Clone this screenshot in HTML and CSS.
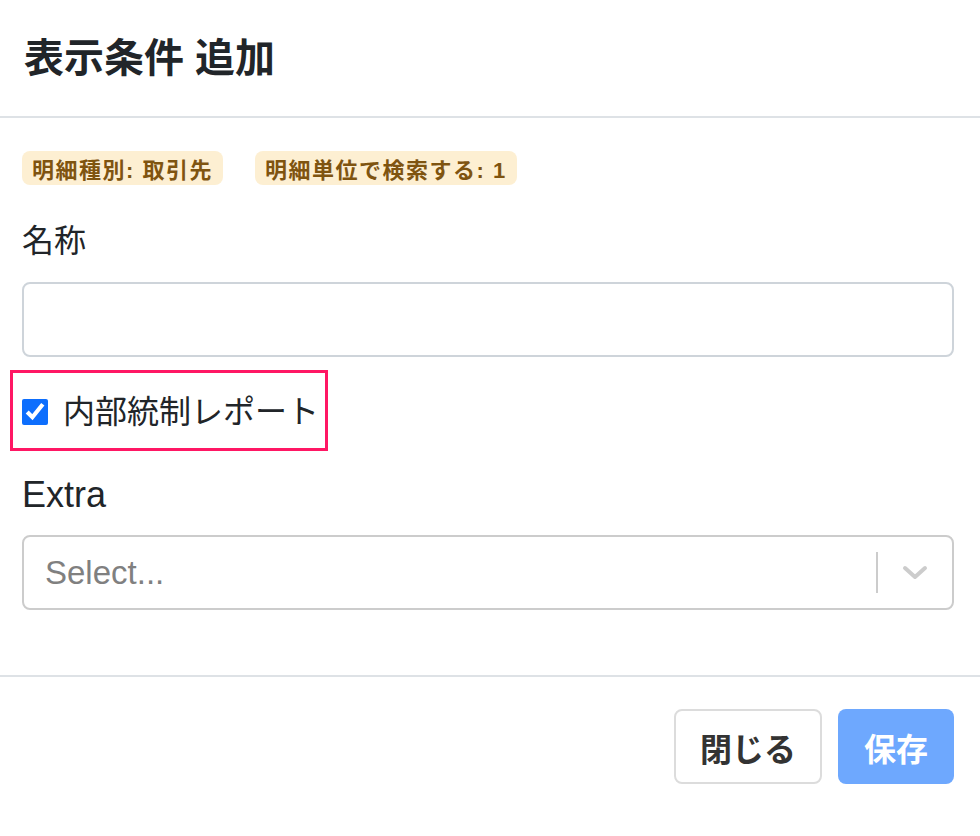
FILE: index.html
```html
<!DOCTYPE html>
<html>
<head>
    <meta charset="utf-8">
    <title>表示条件 追加</title>
    <link rel="stylesheet" href="styles.css">
</head>
<body>
    <div class="modal">
        <div class="modal-header">
            <h1 class="modal-title">表示条件 追加</h1>
        </div>
        <div class="modal-body">
            <div class="badges">
                <span class="badge">明細種別: 取引先</span>
                <span class="badge">明細単位で検索する: 1</span>
            </div>
            <div class="form-group">
                <label class="form-label" for="name">名称</label>
                <input class="form-control" type="text" id="name">
            </div>
            <div class="highlight">
                <input class="check" type="checkbox" id="internal" checked>
                <label class="check-label" for="internal">内部統制レポート</label>
            </div>
            <div class="form-group">
                <label class="form-label latin">Extra</label>
                <div class="select">
                    <span class="placeholder">Select...</span>
                    <span class="separator"></span>
                    <svg class="chevron" width="26" height="16" viewBox="0 0 26 16">
                        <path d="M3 3 L13 12 L23 3" fill="none" stroke="#cccccc" stroke-width="4" stroke-linecap="round" stroke-linejoin="round"/>
                    </svg>
                </div>
            </div>
        </div>
        <div class="modal-footer">
            <button class="btn btn-close" type="button">閉じる</button>
            <button class="btn btn-save" type="button">保存</button>
        </div>
    </div>
</body>
</html>
```

FILE: styles.css
```css
body {
    margin: 0;
    background: #fff;
    font-family: "Liberation Sans", "Noto Sans CJK JP", sans-serif;
    color: #212529;
}

.modal {
    width: 980px;
}

.modal-header {
    height: 116px;
    display: flex;
    align-items: center;
    padding: 0 24px;
    border-bottom: 2px solid #dee2e6;
}

.modal-title {
    margin: 0;
    font-size: 40px;
    font-weight: bold;
    line-height: 1.2;
}

.modal-body {
    padding: 33px 26px 65px 22px;
}

.badges {
    display: flex;
    gap: 32px;
    margin-bottom: 34px;
}

.badge {
    display: inline-flex;
    align-items: center;
    height: 34px;
    padding: 0 10px;
    border-radius: 8px;
    background-color: #fdefd2;
    color: #7f5410;
    font-size: 22px;
    font-weight: bold;
    letter-spacing: 1.5px;
}

.form-label {
    display: block;
    font-size: 32px;
    line-height: 45px;
    margin-bottom: 18px;
}

.form-label.latin {
    font-size: 36px;
}

.form-control {
    display: block;
    box-sizing: border-box;
    width: 100%;
    height: 75px;
    margin: 0;
    border: 2px solid #ced4da;
    border-radius: 8px;
}

.highlight {
    display: inline-flex;
    align-items: center;
    gap: 15px;
    box-sizing: border-box;
    width: 318px;
    height: 81px;
    margin: 13px 0 21px -12px;
    padding: 3px 0 0 9px;
    border: 3px solid #ff1764;
}

.check {
    width: 26px;
    height: 26px;
    margin: 0;
    accent-color: #0d6efd;
}

.check-label {
    font-size: 32px;
    line-height: 45px;
}

.select {
    display: flex;
    align-items: center;
    box-sizing: border-box;
    height: 75px;
    padding: 0 24px 0 21px;
    border: 2px solid #cccccc;
    border-radius: 8px;
}

.placeholder {
    flex: 1;
    font-size: 33px;
    color: #808080;
}

.separator {
    width: 2px;
    height: 41px;
    background-color: #cccccc;
    margin-right: 24px;
}

.modal-footer {
    display: flex;
    justify-content: flex-end;
    gap: 16px;
    padding: 32px 26px 0 0;
    border-top: 2px solid #dee2e6;
}

.btn {
    height: 75px;
    border-radius: 8px;
    font-family: "Noto Sans CJK JP", sans-serif;
    font-size: 32px;
    font-weight: bold;
    cursor: pointer;
}

.btn-close {
    width: 148px;
    background-color: #fff;
    border: 2px solid #dcdcdc;
    color: #333;
}

.btn-save {
    width: 116px;
    background-color: #6ea8fe;
    border: none;
    color: #fff;
}
```
